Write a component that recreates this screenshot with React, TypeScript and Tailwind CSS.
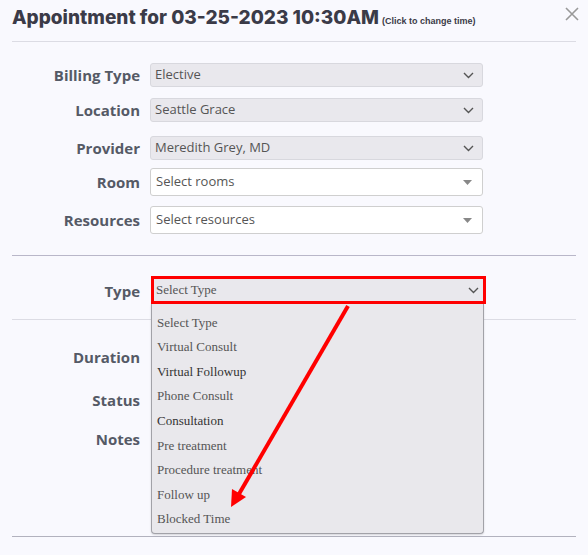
import React from "react";

const typeOptions = [
  "Select Type",
  "Virtual Consult",
  "Virtual Followup",
  "Phone Consult",
  "Consultation",
  "Pre treatment",
  "Procedure treatment",
  "Follow up",
  "Blocked Time",
];

function Chevron() {
  return (
    <svg width="11" height="7" viewBox="0 0 11 7" className="shrink-0">
      <path d="M1 1l4.5 4.5L10 1" fill="none" stroke="#555" strokeWidth="1.4" />
    </svg>
  );
}

function Caret() {
  return (
    <svg width="9" height="5" viewBox="0 0 9 5" className="shrink-0">
      <path d="M0 0h9L4.5 5z" fill="#888" />
    </svg>
  );
}

function Label({ children }: { children: React.ReactNode }) {
  return (
    <div className="w-[128px] shrink-0 whitespace-nowrap text-right text-[15px] font-bold text-[#555a66]">
      {children}
    </div>
  );
}

function GreySelect({ value }: { value: string }) {
  return (
    <div className="flex h-6 w-[333px] items-center justify-between rounded-[3px] border border-[#d8d8de] bg-[#e9e8ed] pl-1 pr-2 text-[13px] text-[#555]">
      <span>{value}</span>
      <Chevron />
    </div>
  );
}

function WhiteSelect({ value }: { value: string }) {
  return (
    <div className="flex h-7 w-[333px] items-center justify-between rounded-[3px] border border-[#cfcfcf] bg-white pl-[5px] pr-[10px] text-[13px] text-[#555]">
      <span>{value}</span>
      <Caret />
    </div>
  );
}

export default function App() {
  return (
    <main
      className="relative h-[555px] w-[588px] overflow-hidden bg-[#f9f9fe]"
      style={{ fontFamily: "'Open Sans', 'Liberation Sans', sans-serif" }}
    >
      <div className="px-3">
        {/* header */}
        <div className="flex h-[42px] items-start justify-between border-b border-[#dcdce4] pt-[4px]">
          <div className="flex items-baseline gap-[3px]">
            <h1 className="font-['Inter',sans-serif] text-[19px] font-extrabold text-[#3b3b48]">
              Appointment for 03-25-2023 10:30AM
            </h1>
            <span className="font-['Liberation_Sans',sans-serif] text-[9px] font-bold text-[#3b3b48]">
              (Click to change time)
            </span>
          </div>
          <button type="button" className="mr-[-3px] mt-[3px]">
            <svg width="14" height="14" viewBox="0 0 14 14">
              <path d="M1 1l12 12M13 1L1 13" stroke="#999" strokeWidth="1.6" />
            </svg>
          </button>
        </div>

        {/* top section */}
        <div className="flex flex-col border-b border-[#b9b7c9] pb-[21px] pt-[21px]">
          <div className="flex items-center gap-[10px]">
            <Label>Billing Type</Label>
            <GreySelect value="Elective" />
          </div>
          <div className="mt-[11px] flex items-center gap-[10px]">
            <Label>Location</Label>
            <GreySelect value="Seattle Grace" />
          </div>
          <div className="mt-[14px] flex items-center gap-[10px]">
            <Label>Provider</Label>
            <GreySelect value="Meredith Grey, MD" />
          </div>
          <div className="mt-2 flex items-center gap-[10px]">
            <Label>Room</Label>
            <WhiteSelect value="Select rooms" />
          </div>
          <div className="mt-[10px] flex items-center gap-[10px]">
            <Label>Resources</Label>
            <WhiteSelect value="Select resources" />
          </div>
        </div>

        {/* type */}
        <div className="flex items-center gap-[11px] border-b border-[#dcdce4] pb-[15px] pt-5">
          <div className="pt-[3px]">
            <Label>Type</Label>
          </div>
          <div className="relative">
            <div className="flex h-[28px] w-[335px] items-center justify-between border-[3px] border-[#ff0000] bg-[#e9e8ed] pl-[2px] pr-[4px] font-['Liberation_Serif',serif] text-[13px] text-[#555]">
              <span>Select Type</span>
              <Chevron />
            </div>
            <div className="absolute left-0 top-[28px] z-10 flex h-[230px] w-[333px] flex-col rounded-b-[4px] border border-t-0 border-[#a2a2a8] bg-[#e9e8ec] pt-[6px] font-['Liberation_Serif',serif] text-[13px] text-[#555] shadow-[0_1px_2px_rgba(0,0,0,0.15)]">
              {typeOptions.map((o, i) => (
                <div
                  key={o}
                  className={`flex h-[24.6px] items-center pl-[5px] ${i === 2 || i === 4 ? "text-[#333]" : ""}`}
                >
                  {o}
                </div>
              ))}
            </div>
          </div>
        </div>

        {/* lower section */}
        <div className="flex h-[217px] flex-col border-b border-[#b2b2be] pt-[26px]">
          <div className="flex h-[22px] items-center">
            <Label>Duration</Label>
          </div>
          <div className="mt-[21px] flex h-[22px] items-center">
            <Label>Status</Label>
          </div>
          <div className="mt-[17px] flex h-[22px] items-center">
            <Label>Notes</Label>
          </div>
        </div>
      </div>

      {/* annotation arrow */}
      <svg className="pointer-events-none absolute left-0 top-0 z-20" width="588" height="555">
        <line x1="348" y1="306" x2="239" y2="494" stroke="#ff0000" strokeWidth="4" />
        <polygon points="231,507 246,497 232,489" fill="#ff0000" />
      </svg>
    </main>
  );
}
